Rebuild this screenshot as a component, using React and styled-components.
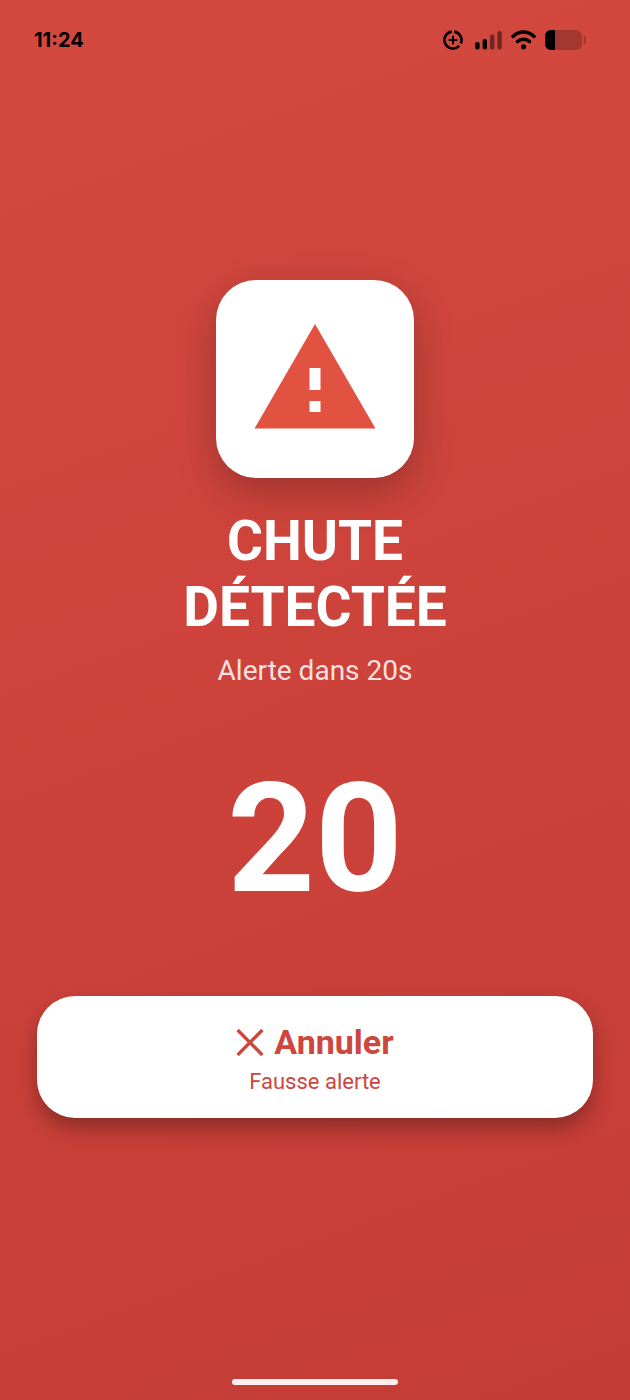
import React, { useState } from 'react';
import styled, { createGlobalStyle } from 'styled-components';

const SECONDS = 20;

export default function App() {
  let [isCancelled, setCancelled] = useState(false);

  return (
    <Screen>
      <GlobalStyle />
      <StatusBar />
      {!isCancelled && <FallAlert onCancel={() => setCancelled(true)} />}
      <HomeArea>
        <HomeIndicator />
      </HomeArea>
    </Screen>
  );
}

function FallAlert({ onCancel }) {
  return (
    <Main>
      <IconCard>
        <WarningIcon />
      </IconCard>
      <Title>
        CHUTE
        <br />
        DÉTECTÉE
      </Title>
      <Subtitle>Alerte dans {SECONDS}s</Subtitle>
      <Countdown role="timer">{SECONDS}</Countdown>
      <CancelButton type="button" onClick={onCancel}>
        <CancelLabel>
          <CrossIcon />
          Annuler
        </CancelLabel>
        <CancelHint>Fausse alerte</CancelHint>
      </CancelButton>
    </Main>
  );
}

function StatusBar() {
  return (
    <StatusHeader>
      <Time>11:24</Time>
      <StatusIcons $gap={12}>
        <FocusIcon />
        <StatusIcons $gap={8}>
          <SignalIcon />
          <WifiIcon />
          <BatteryIcon />
        </StatusIcons>
      </StatusIcons>
    </StatusHeader>
  );
}

function WarningIcon() {
  return (
    <svg width="132" height="132" viewBox="0 0 24 24" aria-hidden="true">
      <path
        fill="#e15241"
        d="M1 21h22L12 2 1 21zm12-3h-2v-2h2v2zm0-4h-2v-4h2v4z"
      />
    </svg>
  );
}

function CrossIcon() {
  return (
    <svg width="28" height="28" viewBox="0 0 28 28" aria-hidden="true">
      <path
        d="M1.6 2L26.4 27M26.4 2L1.6 27"
        stroke="currentColor"
        strokeWidth="3.4"
      />
    </svg>
  );
}

function FocusIcon() {
  return (
    <svg width="20" height="20" viewBox="0 0 20 20" aria-hidden="true">
      <g fill="none" stroke="#000">
        <path
          d="M11.2 1.6A8.5 8.5 0 0 1 17.8 13.4M16.2 15.8A8.5 8.5 0 1 1 8.8 1.6"
          strokeWidth="2.6"
        />
        <path d="M10 6.4v7.2M6.4 10h7.2" strokeWidth="2" strokeLinecap="round" />
      </g>
    </svg>
  );
}

function SignalIcon() {
  return (
    <svg width="28" height="20" viewBox="0 0 28 20" aria-hidden="true">
      <rect x="0.2" y="12" width="4.4" height="7.5" rx="1.8" />
      <rect x="7.6" y="9" width="4.4" height="10.5" rx="1.8" />
      <g opacity="0.45">
        <rect x="15" y="4.5" width="4.4" height="15" rx="1.8" />
        <rect x="22.4" y="1" width="4.4" height="18.5" rx="1.8" />
      </g>
    </svg>
  );
}

function WifiIcon() {
  return (
    <svg width="26" height="20" viewBox="0 0 26 20" aria-hidden="true">
      <g fill="none" stroke="#000" strokeWidth="3.4" strokeLinecap="round">
        <path d="M1.9 6.4C8 .6 17 .6 23.1 6.4" />
        <path d="M6.4 11.6C9.8 8.4 15.2 8.4 18.6 11.6" />
      </g>
      <circle cx="12.5" cy="16.8" r="2.6" />
    </svg>
  );
}

function BatteryIcon() {
  return (
    <svg width="42" height="20" viewBox="0 0 42 20" aria-hidden="true">
      <rect width="37" height="20" rx="6" opacity="0.22" />
      <path d="M6 0H10V20H6A6 6 0 0 1 0 14V6A6 6 0 0 1 6 0z" />
      <rect x="38.8" y="5.5" width="1.8" height="9" rx="0.9" opacity="0.22" />
    </svg>
  );
}

const GlobalStyle = createGlobalStyle`
  * {
    box-sizing: border-box;
  }

  body {
    margin: 0;
    background: #c43c36;
  }
`;

const Screen = styled.div`
  display: flex;
  flex-direction: column;
  min-height: 100vh;
  background: linear-gradient(160deg, #d4493f 0%, #c43c36 100%);
  color: #fff;
  font-family: Roboto, 'Liberation Sans', sans-serif;
`;

const StatusHeader = styled.header`
  display: flex;
  align-items: center;
  justify-content: space-between;
  height: 80px;
  padding: 0 43px 0 34px;
  color: #000;
`;

const Time = styled.time`
  font-family: Inter, 'Liberation Sans', sans-serif;
  font-size: 20px;
  font-weight: 700;
  line-height: 24px;
`;

const StatusIcons = styled.div`
  display: flex;
  align-items: center;
  gap: ${({ $gap }) => $gap}px;

  svg {
    display: block;
  }
`;

const Main = styled.main`
  display: flex;
  flex: 1;
  flex-direction: column;
  align-items: center;
  justify-content: center;
  padding: 0 37px;
  text-align: center;
`;

const IconCard = styled.div`
  display: flex;
  align-items: center;
  justify-content: center;
  width: 198px;
  height: 198px;
  border-radius: 40px;
  background: #fff;
  box-shadow: 0 14px 40px rgba(0, 0, 0, 0.24);
`;

const Title = styled.h1`
  margin: 30px 0 0;
  font-size: 55px;
  font-weight: 700;
  line-height: 66px;
`;

const Subtitle = styled.p`
  margin: 14px 0 0;
  color: rgba(255, 255, 255, 0.85);
  font-size: 28px;
  line-height: 34px;
`;

const Countdown = styled.div`
  margin-top: 74px;
  font-size: 153px;
  font-weight: 700;
  line-height: 154px;
`;

const CancelButton = styled.button`
  display: flex;
  flex-direction: column;
  align-items: center;
  gap: 6px;
  width: 100%;
  margin-top: 80px;
  padding: 26px 24px 22px;
  border: 0;
  border-radius: 38px;
  background: #fff;
  box-shadow: 0 10px 20px rgba(0, 0, 0, 0.3);
  color: #cd473f;
  font-family: inherit;
  cursor: pointer;
`;

const CancelLabel = styled.span`
  display: flex;
  align-items: center;
  gap: 10px;
  font-size: 34px;
  font-weight: 700;
  line-height: 40px;
`;

const CancelHint = styled.span`
  font-size: 22px;
  line-height: 28px;
`;

const HomeArea = styled.footer`
  display: flex;
  align-items: flex-end;
  justify-content: center;
  height: 82px;
  padding-bottom: 15px;
`;

const HomeIndicator = styled.div`
  width: 166px;
  height: 6px;
  border-radius: 3px;
  background: #ffefee;
`;
